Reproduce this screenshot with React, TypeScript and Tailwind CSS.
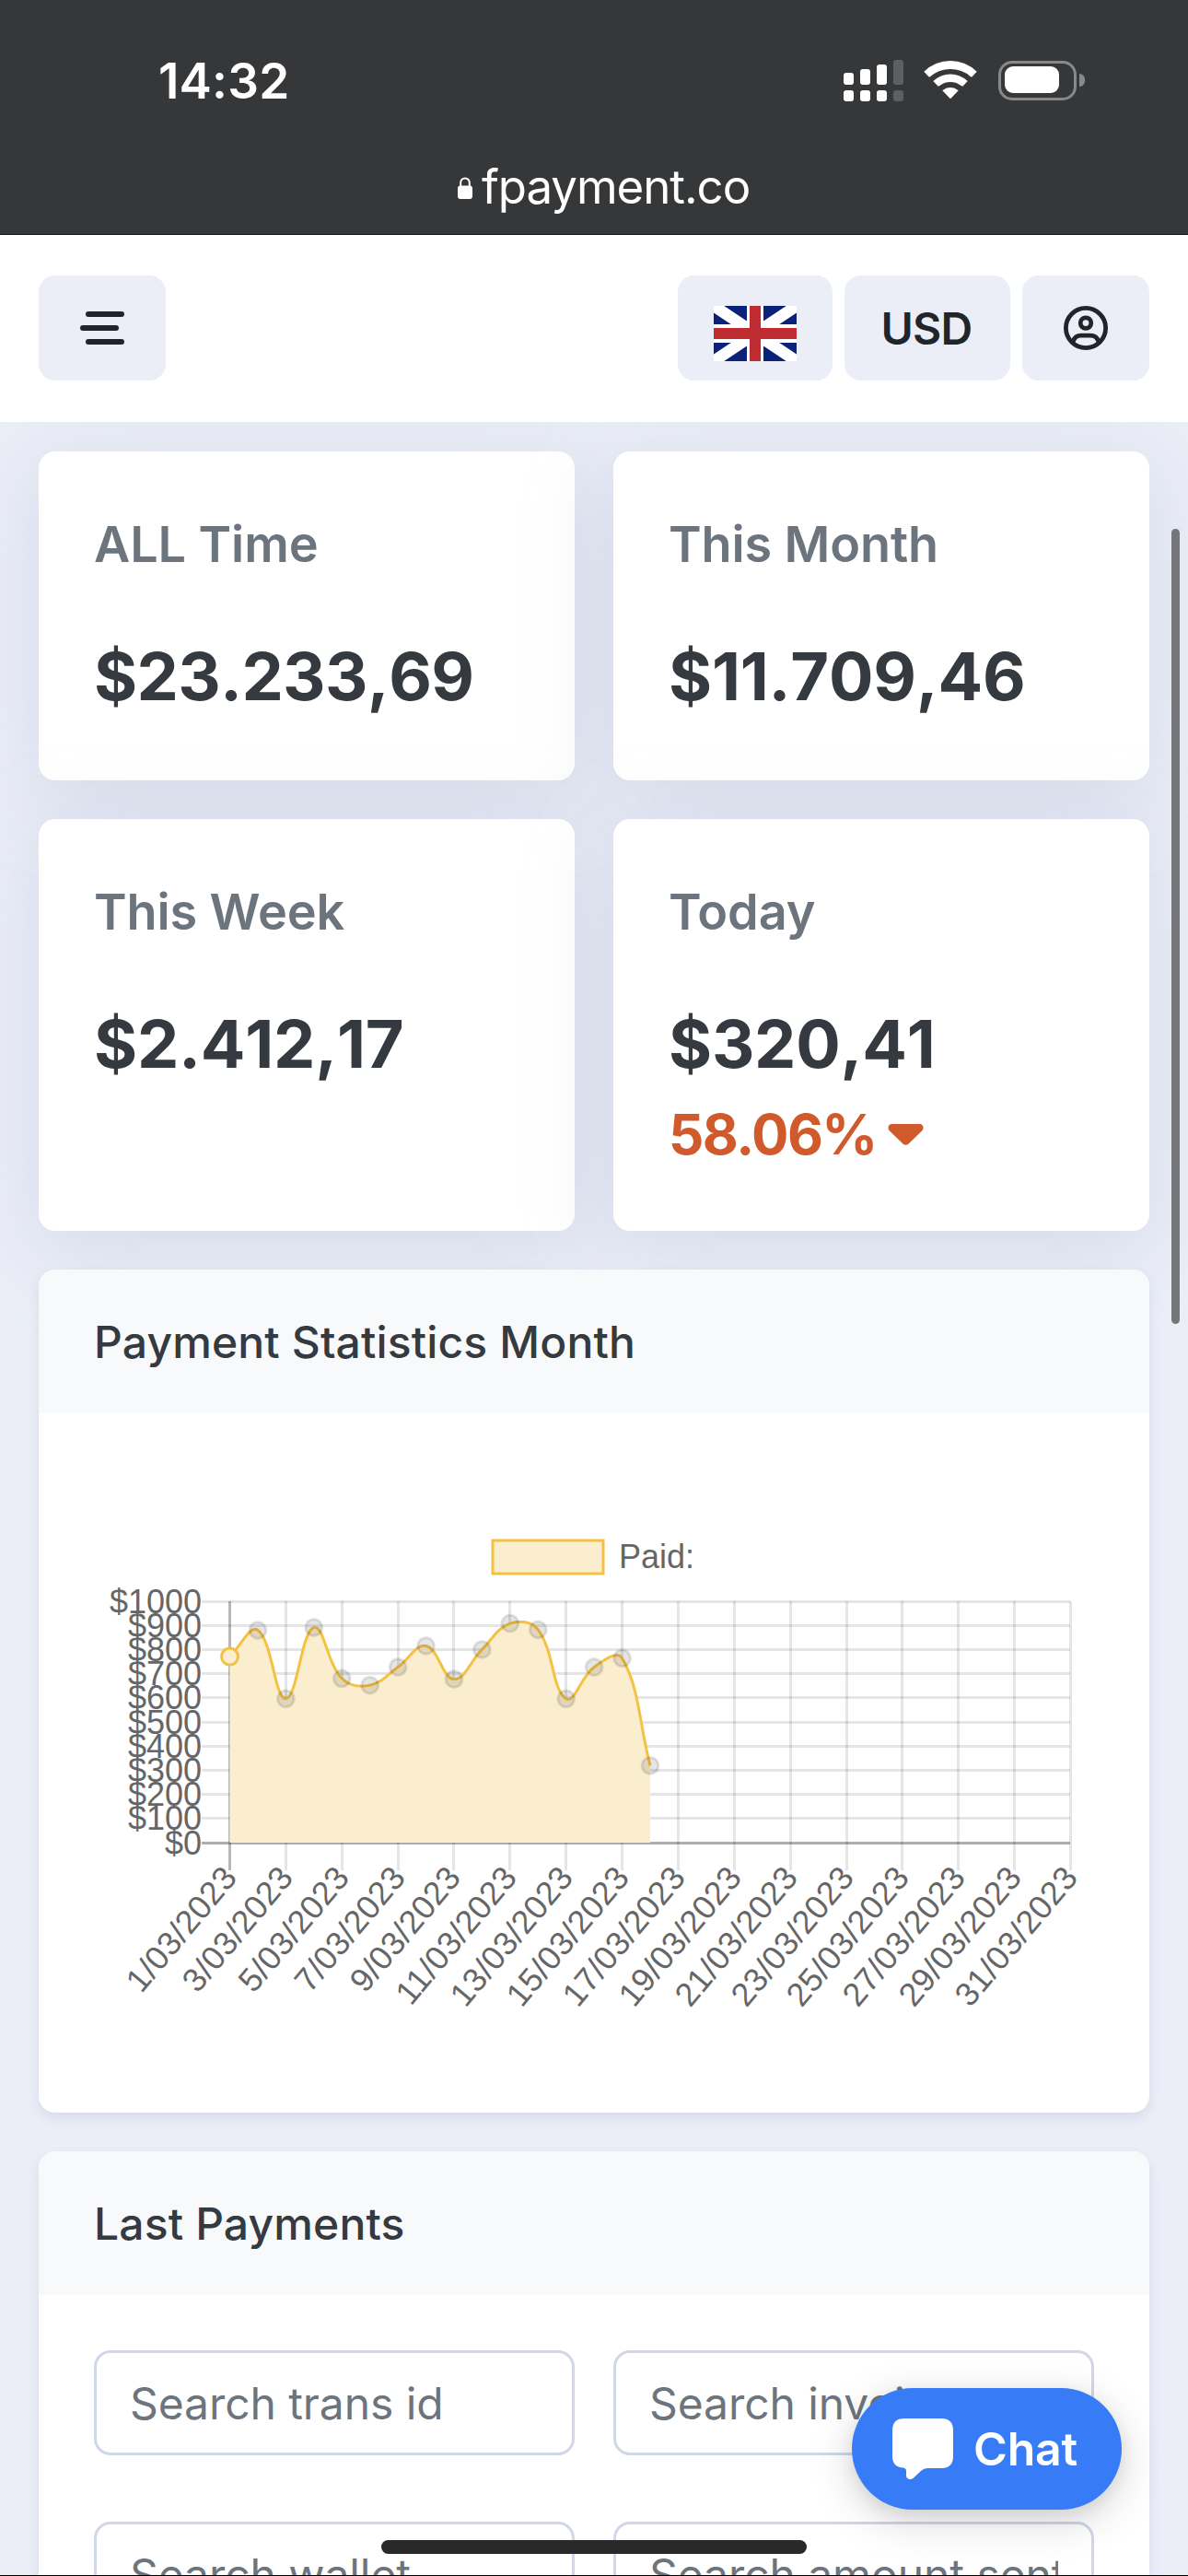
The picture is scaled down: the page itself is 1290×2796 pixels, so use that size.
import React from "react";

type StatProps = { label: string; amount: string; change?: string; tight?: boolean };

const inter = "font-['Inter',sans-serif]";

function StatusBar() {
  const bars = [
    { h: "h-[13px]", c: "bg-white" },
    { h: "h-[17px]", c: "bg-white" },
    { h: "h-[22px]", c: "bg-white" },
    { h: "h-[27px]", c: "bg-[#5e5f61]" },
  ];
  return (
    <div className="flex h-[255px] flex-col border-b border-[#151518] bg-[#363739] text-white">
      <div className="flex h-[174px] items-center justify-between pr-[112px] pl-[172px]">
        <span className="pt-[1px] text-[53px] leading-[60px] font-semibold tracking-[0.2px]">14:32</span>
        <div className="flex items-center">
          <div className="flex h-[45px] items-end gap-[7px]">
            {bars.map((b, i) => (
              <div key={i} className="flex flex-col gap-[6px]">
                <div className={`w-[11px] rounded-[3px] ${b.h} ${b.c}`} />
                <div className={`h-[12px] w-[11px] rounded-[3px] ${b.c}`} />
              </div>
            ))}
          </div>
          <svg className="ml-[21px]" width="60" height="44" viewBox="0 0 60 44" fill="white">
            <path d="M1.3 12.8 A41 41 0 0 1 58.7 12.8 L53.6 18.3 Q52.8 18.8 52 18.2 A33.5 33.5 0 0 0 8 18.2 Q7.2 18.8 6.4 18.3 Z" />
            <path d="M11.3 23 A27 27 0 0 1 48.7 23 L43.6 28.4 Q42.8 28.9 42 28.2 A19 19 0 0 0 18 28.2 Q17.2 28.9 16.4 28.4 Z" />
            <path d="M21.3 33.3 A13 13 0 0 1 38.7 33.3 L30.8 41.6 Q30 42.4 29.2 41.6 Z" />
          </svg>
          <div className="ml-[22px] flex h-[43px] w-[85px] rounded-[15px] border-[3.5px] border-[#88898b] p-[3.5px]">
            <div className="h-[29px] w-[59px] rounded-[9px] bg-white" />
          </div>
          <div className="ml-[3px] h-[14px] w-[6px] rounded-r-full bg-[#88898b]" />
        </div>
      </div>
      <div className="flex h-[60px] items-center pl-[497px]">
        <svg width="16" height="24" viewBox="0 0 16 24">
          <path d="M3.2 11V6.2a4.8 4.8 0 0 1 9.6 0V11" fill="none" stroke="white" strokeWidth="2" />
          <rect x="0" y="9.5" width="16" height="14.5" rx="3" fill="white" />
        </svg>
        <span className="ml-[10px] pb-[3px] text-[51px] leading-[60px] tracking-[-1.050px]">fpayment.co</span>
      </div>
    </div>
  );
}

function Flag() {
  return (
    <svg width="90" height="60" viewBox="0 0 90 60">
      <rect width="90" height="60" fill="#0a2279" />
      <path d="M0 0L90 60M90 0L0 60" stroke="white" strokeWidth="12.5" />
      <path d="M45 0V60" stroke="white" strokeWidth="18" />
      <path d="M0 30H90" stroke="white" strokeWidth="20" />
      <path d="M45 0V60M0 30H90" stroke="#bf2d33" strokeWidth="12" />
    </svg>
  );
}

function Header() {
  const btn = "flex h-[114px] items-center justify-center rounded-[18px] bg-[#ebeef6] text-[#212529]";
  return (
    <header className="relative z-10 flex h-[203px] items-center justify-between bg-white px-[42px] pb-px">
      <button className={`${btn} w-[138px]`}>
        <svg width="48" height="36" viewBox="0 0 48 36" stroke="#212529" strokeWidth="6" strokeLinecap="round">
          <path d="M9 3H45M3 18H39M9 33H45" />
        </svg>
      </button>
      <div className="flex">
        <button className={`${btn} w-[168px] pt-[12px]`}>
          <Flag />
        </button>
        <button className={`${btn} ml-[13px] w-[180px] pt-[2px] pr-[2px] text-[48px] leading-[58px] font-semibold tracking-[-0.8px]`}>
          USD
        </button>
        <button className={`${btn} ml-[13px] w-[138px]`}>
          <svg width="48" height="48" viewBox="0 0 48 48" fill="none" stroke="#212529" strokeWidth="4.8">
            <circle cx="24" cy="24" r="21.6" />
            <circle cx="24" cy="18.6" r="5.8" />
            <path d="M10 39C11.6 34 15 32.2 19 32.2H29C33 32.2 36.4 34 38 39" />
          </svg>
        </button>
      </div>
    </header>
  );
}

function StatCard({ label, amount, change, tight }: StatProps) {
  return (
    <div className="rounded-[18px] bg-white px-[60px] pt-[68px] shadow-[0_18px_90px_rgba(172,180,208,0.36)]">
      <div className="text-[54px] leading-[66px] font-semibold tracking-[-0.1px] text-[#6c757d]">{label}</div>
      <div
        className={`mt-[65px] text-[72px] leading-[90px] font-bold text-[#343a40] [font-kerning:none] ${
          tight ? "tracking-[-0.650px]" : "tracking-[-0.25px]"
        }`}
      >
        {amount}
      </div>
      {change && (
        <div className="mt-[14px] flex items-center text-[60px] leading-[78px] font-bold tracking-[-1.500px] text-[#d15a2d]">
          {change}
          <svg className="ml-[12px]" width="39" height="23" viewBox="0 0 39 23" fill="currentColor">
            <path d="M4 0H35Q38.5 .6 38.5 4Q38.5 6 37 7.600L22.500 21.500Q19.500 24 16.500 21.500L2 7.600Q.5 6 .5 4Q.5 .6 4 0Z" />
          </svg>
        </div>
      )}
    </div>
  );
}

// Chart geometry, in the pixel space of the 1128 x 560 drawing.
const LEFT = 168;
const TOP = 104;
const BOTTOM = 366;
const RIGHT = 1081;
const STEP = (RIGHT - LEFT) / 30;
const paid = [773, 882, 598, 893, 682, 654, 729, 817, 679, 802, 910, 884, 598, 729, 766, 321];

type Pt = { x: number; y: number };
const points: Pt[] = paid.map((v, i) => ({
  x: LEFT + 0.5 + i * STEP,
  y: BOTTOM + 0.5 - (v / 1000) * (BOTTOM - TOP),
}));

// Smooths the series with control points set from neighbouring distances.
function curve(pts: Pt[]): string {
  const tension = 0.4;
  const ctl = pts.map((p, i) => {
    const a = pts[i - 1] ?? p;
    const b = pts[i + 1] ?? p;
    const d01 = Math.hypot(p.x - a.x, p.y - a.y);
    const d12 = Math.hypot(b.x - p.x, b.y - p.y);
    const fa = (tension * d01) / (d01 + d12);
    const fb = (tension * d12) / (d01 + d12);
    return {
      px: p.x - fa * (b.x - a.x),
      py: p.y - fa * (b.y - a.y),
      nx: p.x + fb * (b.x - a.x),
      ny: p.y + fb * (b.y - a.y),
    };
  });
  let d = `M${pts[0].x} ${pts[0].y}`;
  for (let i = 1; i < pts.length; i++) {
    d += `C${ctl[i - 1].nx} ${ctl[i - 1].ny} ${ctl[i].px} ${ctl[i].py} ${pts[i].x} ${pts[i].y}`;
  }
  return d;
}

function PaymentChart() {
  const line = curve(points);
  return (
    <svg
      className="font-['Liberation_Sans',Arial,sans-serif]"
      width="1128"
      height="560"
      viewBox="0 0 1128 560"
      fill="#666666"
      fontSize="36"
    >
      <rect x="454" y="38" width="120" height="36" fill="#fbeecf" stroke="#f4c243" strokeWidth="3" />
      <text x="591" y="68">Paid:</text>

      {Array.from({ length: 11 }, (_, i) => {
        const y = Math.floor(TOP + 0.01 + i * 26.2) + 0.5;
        return (
          <g key={i}>
            <path d={`M138 ${y}H${RIGHT}`} stroke={i === 10 ? "rgba(0,0,0,.32)" : "rgba(0,0,0,.1)"} strokeWidth="3" />
            <text x="138" y={y + 12} textAnchor="end">{`$${1000 - i * 100}`}</text>
          </g>
        );
      })}
      {Array.from({ length: 16 }, (_, i) => {
        const x = Math.round(LEFT + i * STEP * 2) + 0.5;
        return (
          <g key={i}>
            <path d={`M${x} ${TOP}V396`} stroke={i === 0 ? "rgba(0,0,0,.28)" : "rgba(0,0,0,.1)"} strokeWidth="3" />
            <text transform={`translate(${x} 396.5) rotate(-50)`} y="12.600" textAnchor="end" letterSpacing="0.45">
              {`${i * 2 + 1}/03/2023`}
            </text>
          </g>
        );
      })}

      <path d={`${line}V${BOTTOM}H${LEFT + 0.5}Z`} fill="#fbeecf" />
      <path d={line} fill="none" stroke="#f4c243" strokeWidth="3" />
      {points.slice(1).map((p, i) => (
        <circle key={i} cx={p.x} cy={p.y} r="9" fill="rgba(0,0,0,.1)" stroke="rgba(0,0,0,.1)" strokeWidth="3" />
      ))}
      <circle cx={points[0].x} cy={points[0].y} r="9" fill="#fbeecf" stroke="#f4c243" strokeWidth="3" />
    </svg>
  );
}

function Panel({ title, className, children }: { title: string; className: string; children: React.ReactNode }) {
  return (
    <section className={`flex flex-col overflow-hidden rounded-[18px] bg-white shadow-[0_6px_12px_rgba(170,178,205,0.3)] ${className}`}>
      <h2 className="flex h-[156px] shrink-0 items-center bg-[#f8f9fb] px-[60px] pt-[2px] text-[48px] leading-[58px] font-medium tracking-[0.150px] text-[#343a40]">
        {title}
      </h2>
      {children}
    </section>
  );
}

function Field({ text }: { text: string }) {
  return (
    <div className="flex h-[114px] items-center rounded-[18px] border-[3px] border-[#d1d7e8] bg-white px-[36px] pt-[2px] text-[48px] leading-[72px] tracking-[-0.080px] text-[#6c757d]">
      <span className="min-w-0 flex-1 overflow-hidden whitespace-nowrap">{text}</span>
    </div>
  );
}

export default function App() {
  return (
    <div className={`relative h-[2796px] w-[1290px] overflow-hidden bg-[#ebeef7] ${inter}`}>
      <StatusBar />
      <Header />
      <main className="flex flex-col gap-[42px] px-[42px] pt-[32px]">
        <div className="grid grid-cols-2 grid-rows-[357px_447px] gap-[42px]">
          <StatCard label="ALL Time" amount="$23.233,69" tight />
          <StatCard label="This Month" amount="$11.709,46" />
          <StatCard label="This Week" amount="$2.412,17" />
          <StatCard label="Today" amount="$320,41" change="58.06%" />
        </div>
        <Panel title="Payment Statistics Month" className="relative h-[915px]">
          <div className="px-[39px] pt-[100px]">
            <PaymentChart />
          </div>
        </Panel>
        <Panel title="Last Payments" className="relative h-[600px]">
          <div className="grid grid-cols-2 gap-x-[42px] gap-y-[72px] p-[60px]">
            <Field text="Search trans id" />
            <Field text="Search invoice" />
            <Field text="Search wallet" />
            <Field text="Search amount sent" />
          </div>
        </Panel>
      </main>

      <div className="absolute top-[574px] left-[1272px] h-[863px] w-[9px] rounded-full bg-[#757679]" />
      <button className="absolute top-[2592px] left-[925px] flex h-[132px] w-[293px] items-center rounded-full bg-[#377cf6] pl-[44px] text-white shadow-[0_12px_48px_rgba(0,0,0,0.16),0_6px_18px_rgba(0,0,0,0.08)]">
        <svg width="66" height="66" viewBox="0 0 66 66" fill="white">
          <path d="M13 0H53Q66 0 66 13V41Q66 54 53 54H38Q34 54 31 57L23 64.500Q20 67 17 65.500Q15 64.500 15 62V57Q15 54 12 53.500Q0 53 0 41V13Q0 0 13 0Z" />
        </svg>
        <span className="ml-[22px] text-[50px] leading-[60px] font-semibold tracking-[-0.2px]">Chat</span>
      </button>
      <div className="absolute top-[2757px] left-[414px] h-[15px] w-[462px] rounded-full bg-[#29292a]" />
      <div className="absolute bottom-0 left-0 h-px w-full bg-black" />
    </div>
  );
}
